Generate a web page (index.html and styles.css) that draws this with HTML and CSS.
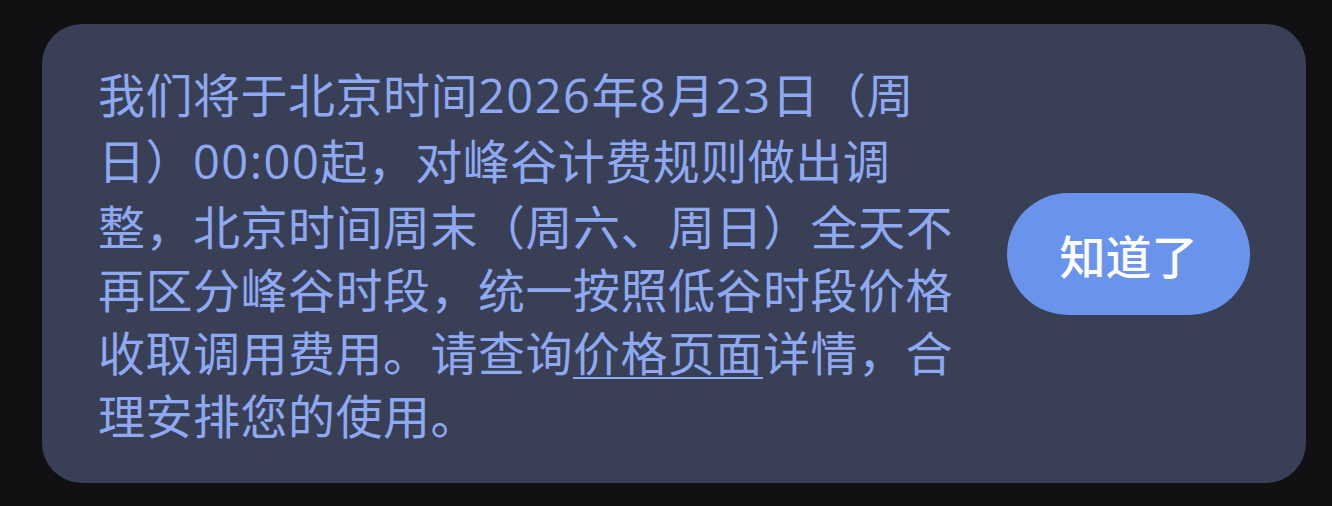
FILE: index.html
```html
<!DOCTYPE html>
<html lang="zh-CN">
<head>
<meta charset="utf-8">
<title>通知</title>
<link rel="stylesheet" href="styles.css">
</head>
<body>
<div class="page">
  <div class="card">
    <p class="message">我们将于北京时间<span class="num">2026</span>年<span class="num">8</span>月<span class="num">23</span>日（周日）<span class="num">00:00</span>起，对峰谷计费规则做出调整，北京时间周末（周六、周日）全天不再区分峰谷时段，统一按照低谷时段价格收取调用费用。请查询<a class="link" href="#">价格页面</a>详情，合理安排您的使用。</p>
    <button class="btn">知道了</button>
  </div>
</div>
</body>
</html>
```
FILE: styles.css
```css
html, body {
  margin: 0;
  padding: 0;
  background: #111114;
}
.page {
  width: 1332px;
  height: 506px;
  box-sizing: border-box;
  padding: 24px 26px 23px 42px;
}
.card {
  height: 459px;
  box-sizing: border-box;
  background: #394056;
  border-radius: 40px;
  padding: 37px 56px 44px 56px;
  display: flex;
  align-items: center;
  justify-content: space-between;
}
.message {
  margin: 0;
  width: 870px;
  align-self: flex-start;
  font-family: "Noto Sans CJK SC", "Noto Sans", sans-serif;
  font-size: 47px;
  line-height: 63px;
  letter-spacing: 0.5px;
  color: #8ea9f2;
  text-spacing-trim: space-all;
}
.num {
  font-family: "Open Sans", "Noto Sans CJK SC", sans-serif;
  letter-spacing: 1.5px;
}
.link {
  color: #8ea9f2;
  text-decoration: underline;
  text-decoration-thickness: 2px;
  text-underline-offset: 6px;
}
.btn {
  width: 243px;
  height: 122px;
  margin-top: 7px;
  border: none;
  border-radius: 61px;
  background: #6a93ec;
  color: #ffffff;
  font-family: "Noto Sans CJK SC", "Noto Sans", sans-serif;
  font-size: 46px;
  font-weight: 500;
  padding: 0;
}
```
